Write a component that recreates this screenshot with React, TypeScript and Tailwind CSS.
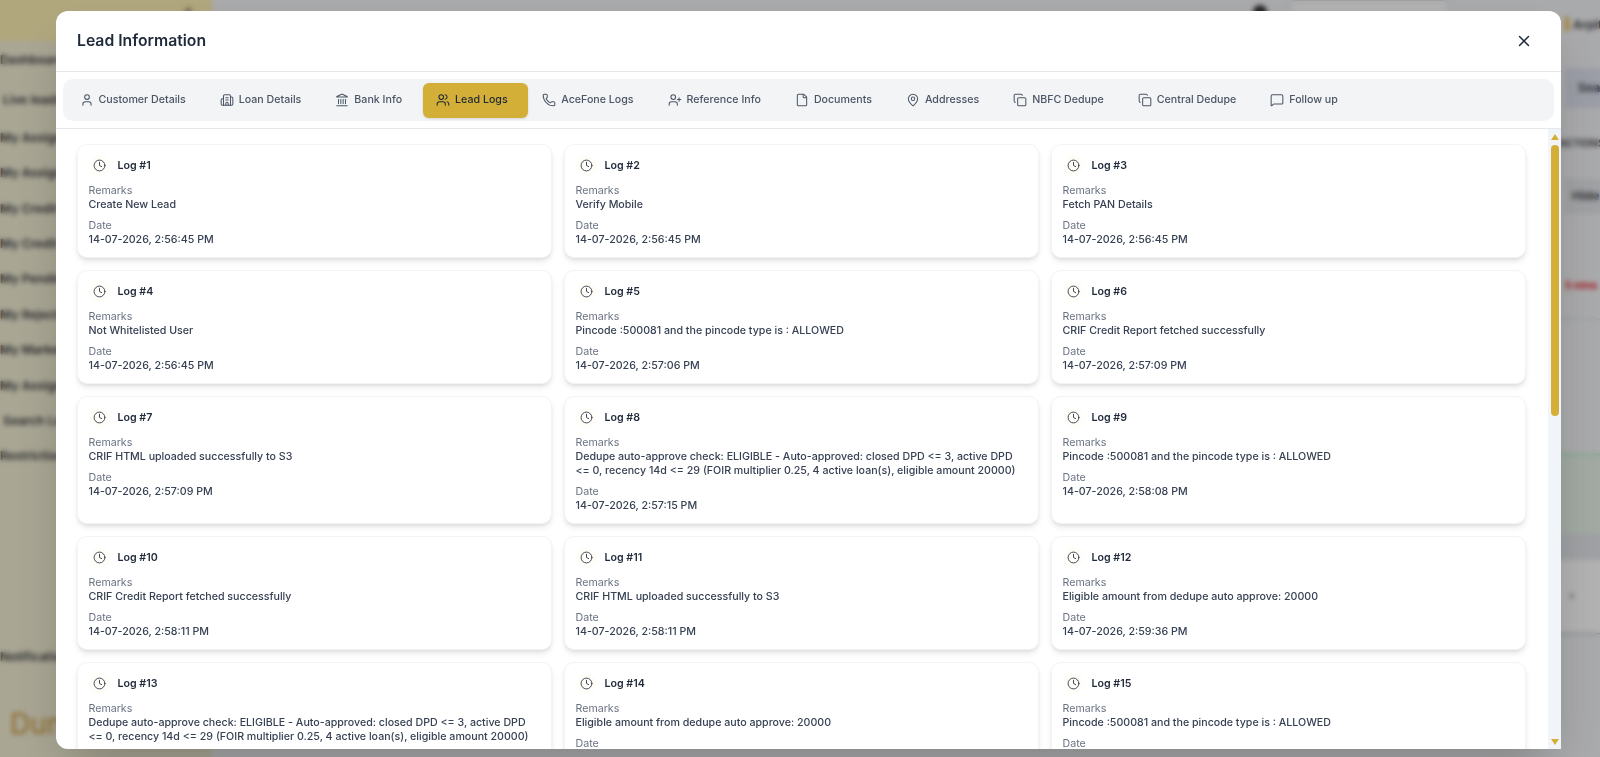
import React from "react";
import {
  User,
  Building2,
  Landmark,
  Users,
  Phone,
  UserPlus,
  File,
  MapPin,
  Copy,
  MessageSquare,
  Clock,
  X,
} from "lucide-react";

const tabs = [
  { label: "Customer Details", icon: User },
  { label: "Loan Details", icon: Building2 },
  { label: "Bank Info", icon: Landmark },
  { label: "Lead Logs", icon: Users, active: true },
  { label: "AceFone Logs", icon: Phone },
  { label: "Reference Info", icon: UserPlus },
  { label: "Documents", icon: File },
  { label: "Addresses", icon: MapPin },
  { label: "NBFC Dedupe", icon: Copy },
  { label: "Central Dedupe", icon: Copy },
  { label: "Follow up", icon: MessageSquare },
];

const dedupe =
  "Dedupe auto-approve check: ELIGIBLE - Auto-approved: closed DPD <= 3, active DPD <= 0, recency 14d <= 29 (FOIR multiplier 0.25, 4 active loan(s), eligible amount 20000)";
const pincode = "Pincode :500081 and the pincode type is : ALLOWED";
const crifReport = "CRIF Credit Report fetched successfully";
const crifHtml = "CRIF HTML uploaded successfully to S3";
const eligible = "Eligible amount from dedupe auto approve: 20000";

const logs = [
  ["Create New Lead", "14-07-2026, 2:56:45 PM"],
  ["Verify Mobile", "14-07-2026, 2:56:45 PM"],
  ["Fetch PAN Details", "14-07-2026, 2:56:45 PM"],
  ["Not Whitelisted User", "14-07-2026, 2:56:45 PM"],
  [pincode, "14-07-2026, 2:57:06 PM"],
  [crifReport, "14-07-2026, 2:57:09 PM"],
  [crifHtml, "14-07-2026, 2:57:09 PM"],
  [dedupe, "14-07-2026, 2:57:15 PM"],
  [pincode, "14-07-2026, 2:58:08 PM"],
  [crifReport, "14-07-2026, 2:58:11 PM"],
  [crifHtml, "14-07-2026, 2:58:11 PM"],
  [eligible, "14-07-2026, 2:59:36 PM"],
  [dedupe, "14-07-2026, 2:59:36 PM"],
  [eligible, "14-07-2026, 2:59:36 PM"],
  [pincode, "14-07-2026, 3:00:12 PM"],
];

const sideLinks = [
  { label: "Dashboard", h: "h-[39px]" },
  { label: "Live leads", h: "h-[40px]", indent: true },
  { label: "My Assigned", h: "h-[36px]" },
  { label: "My Assigned", h: "h-[35px]" },
  { label: "My Credit", h: "h-[36px]" },
  { label: "My Credit", h: "h-[35px]" },
  { label: "My Pending", h: "h-[35px]" },
  { label: "My Rejected", h: "h-[36px]" },
  { label: "My Marked", h: "h-[35px]" },
  { label: "My Assigned", h: "h-[36px]" },
  { label: "Search Leads", h: "h-[35px]", indent: true },
  { label: "Restrictions", h: "h-[35px]" },
];

function PageBehind() {
  return (
    <div className="flex h-screen overflow-hidden bg-gray-100 font-['Inter',sans-serif]">
      <aside className="flex w-[212px] shrink-0 flex-col bg-[#f2eed4] text-[12.25px] font-semibold text-[#3f3f46]">
        <div className="flex h-[41px] justify-end bg-[#fdefb4] pr-[20px] pt-[2px] text-[#52525b]">«</div>
        <div className="flex flex-col">
          {sideLinks.map((l, i) => (
            <div key={i} className={`flex items-center ${l.h} ${l.indent ? "pl-[3px]" : ""}`}>
              {l.label}
            </div>
          ))}
        </div>
        <div className="mt-[174px]">Notifications</div>
        <div className="mt-[44px] pl-[10px] text-[28px] font-normal leading-none text-[#c8953a]">Dunia</div>
      </aside>
      <main className="flex min-w-0 flex-1 flex-col text-[12.25px] font-semibold text-[#3f3f46]">
        <div className="flex h-[46px] shrink-0 items-start justify-end">
          <div className="mr-[22px] mt-[5px] h-[14px] w-[14px] rounded-full bg-[#333]" />
          <div className="mr-[116px] h-[14px] w-[160px] rounded-md border border-gray-300 bg-white" />
          <div className="mt-[17px] h-[14px] w-[4px] bg-[#e9b949]" />
          <div className="mt-[16px] w-[31px] pl-[4px]">Arpit</div>
        </div>
        <div className="ml-auto flex w-[35px] flex-col">
          <div className="mt-[22px] flex h-[40px] w-full items-center whitespace-nowrap rounded-l bg-[#dfe3f0] pl-[13px]">Search</div>
          <div className="-ml-[6px] mt-[28px] whitespace-nowrap text-[10px]">ACTIONS</div>
          <div className="mt-[28px] flex h-[35px] items-center whitespace-nowrap bg-gray-200 pl-[7px]">Hide</div>
          <div className="mt-[64px] whitespace-nowrap text-[10px] text-red-600">5 mins</div>
        </div>
        <div className="mt-[26px] h-px bg-gray-300" />
        <div className="mt-[134px] h-[80px] border-t border-green-300 bg-[#e8f3ea]" />
        <div className="h-[26px] bg-[#e5e7eb]" />
        <div className="flex h-[74px] items-center justify-end border-b border-gray-400 bg-white pr-[26px] text-gray-500">›</div>
      </main>
    </div>
  );
}

function LogCard({ n, remarks, date }: { n: number; remarks: string; date: string }) {
  return (
    <div className="rounded-[10px] border border-gray-100 bg-white px-[10.5px] pb-[9.5px] pt-[10.5px] shadow-md">
      <div className="mb-[7.5px] flex items-center gap-[8px]">
        <span className="rounded-full bg-[#fffdf7] p-[4px] text-gray-700">
          <Clock className="h-[13px] w-[13px]" strokeWidth={1.75} />
        </span>
        <span className="text-[10.65px] font-semibold text-gray-800">Log #{n}</span>
      </div>
      <div className="flex flex-col gap-[7.5px] text-[10.65px] leading-[14px]">
        <div>
          <p className="text-gray-500">Remarks</p>
          <p className="font-medium text-gray-700">{remarks}</p>
        </div>
        <div>
          <p className="text-gray-500">Date</p>
          <p className="font-medium text-gray-700">{date}</p>
        </div>
      </div>
    </div>
  );
}

// native bars don't show in the headless shot, so this one is drawn
function ScrollRail() {
  return (
    <div className="flex w-[13px] shrink-0 flex-col items-center bg-[#f1f5f9] pb-[4px] pt-[5px]">
      <svg width="8" height="6" viewBox="0 0 8 6" className="fill-[#d4af37]">
        <path d="M4 0 8 6H0Z" />
      </svg>
      <div className="mt-[5px] h-[271px] w-[8px] rounded-full bg-[#d4af37]" />
      <svg width="8" height="6" viewBox="0 0 8 6" className="mt-auto fill-[#d4af37]">
        <path d="M0 0H8L4 6Z" />
      </svg>
    </div>
  );
}

export default function App() {
  return (
    <div>
      <PageBehind />
      <div className="fixed inset-0 flex bg-black/30 pb-[8px] pl-[56px] pr-[39px] pt-[11px] font-['Inter',sans-serif] backdrop-blur-[2.5px]">
        <div className="flex min-w-0 flex-1 flex-col rounded-xl bg-white shadow-2xl">
          <div className="flex h-[61px] shrink-0 items-center justify-between border-b border-gray-200 pb-[1px] pl-[21px] pr-[28px]">
            <h2 className="text-[15.75px] font-semibold text-gray-800">Lead Information</h2>
            <X className="h-[18px] w-[18px] text-gray-800" strokeWidth={2} />
          </div>

          <div className="shrink-0 border-b border-gray-200 px-[7px] py-[7px]">
            <div className="flex items-center gap-[7px] rounded-[10px] bg-gray-100 p-[3.5px] pl-[3px]">
              {tabs.map((t) => (
                <button
                  key={t.label}
                  className={
                    t.active
                      ? "-mr-[6px] flex h-[35px] items-center gap-[5px] rounded-md bg-[#d4af37] pl-[13.5px] pr-[20px] text-[10.65px] font-medium text-gray-800 shadow-sm"
                      : "flex h-[35px] items-center gap-[5px] rounded-md px-[13.5px] text-[10.65px] font-medium text-gray-600"
                  }
                >
                  <t.icon className="h-[14px] w-[14px]" strokeWidth={1.75} />
                  {t.label}
                </button>
              ))}
            </div>
          </div>

          <div className="flex min-h-0 flex-1">
            <div className="min-w-0 flex-1 overflow-hidden rounded-bl-xl">
              <div className="grid grid-cols-3 gap-[12px] pl-[21px] pr-[22px] pt-[14.5px]">
                {logs.map((l, i) => (
                  <LogCard key={i} n={i + 1} remarks={l[0]} date={l[1]} />
                ))}
              </div>
            </div>
            <ScrollRail />
          </div>
        </div>
      </div>
    </div>
  );
}
